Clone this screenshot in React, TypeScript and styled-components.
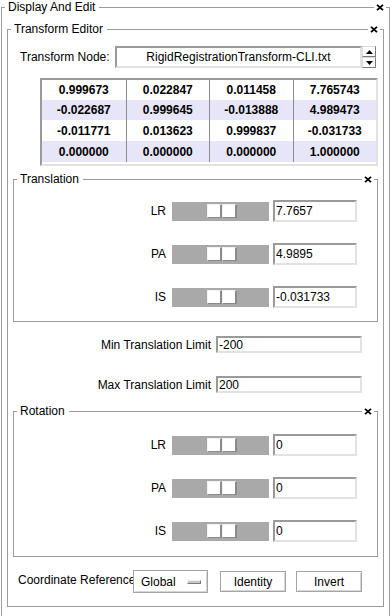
import React from "react";
import styled, { createGlobalStyle } from "styled-components";

const LINE = "#9c9c9c";
const SUNK_DARK = "#9a9a9a";
const SUNK_LIGHT = "#e2e2e2";

const GlobalStyle = createGlobalStyle`
  html, body {
    margin: 0;
    padding: 0;
    background: #ffffff;
  }
  body {
    font-family: "Liberation Sans", Arial, sans-serif;
    font-size: 12px;
    color: #000;
  }
`;

const Page = styled.div`
  width: 392px;
  height: 616px;
  padding: 0 2px 0 1px;
  box-sizing: border-box;
  overflow: hidden;
`;

/* ---------- group frame ---------- */

const FrameBox = styled.div<{ $top?: number }>`
  display: flex;
  flex-direction: column;
  margin-top: ${(p) => p.$top || 0}px;
`;

const FrameHead = styled.div`
  display: flex;
  height: 14px;
`;

const Lead = styled.div`
  flex: none;
  width: 3px;
  margin-top: 7px;
  border-top: 1px solid ${LINE};
  border-left: 1px solid ${LINE};
`;

const Tail = styled.div`
  flex: none;
  width: 3px;
  margin-top: 7px;
  border-top: 1px solid ${LINE};
  border-right: 1px solid ${LINE};
`;

const Caption = styled.span`
  flex: none;
  line-height: 14px;
  padding: 0 4px 0 3px;
  white-space: nowrap;
`;

const Rule = styled.div`
  flex: 1;
  align-self: flex-start;
  margin-top: 7px;
  height: 1px;
  background: ${LINE};
`;

const CloseMark = styled.svg`
  flex: none;
  align-self: center;
  margin: 0 2px;
`;

const FrameBody = styled.div<{ $pad: string }>`
  display: flex;
  flex-direction: column;
  border: 1px solid ${LINE};
  border-top: none;
  padding: ${(p) => p.$pad};
`;

const Frame = (props: { title: string; pad: string; top?: number; children?: React.ReactNode }) => (
  <FrameBox $top={props.top}>
    <FrameHead>
      <Lead />
      <Caption>{props.title}</Caption>
      <Rule />
      <CloseMark width="8" height="7" viewBox="0 0 8 7">
        <path d="M1 0.8 L7 6.2 M7 0.8 L1 6.2" stroke="#000" strokeWidth="1.8" fill="none" />
      </CloseMark>
      <Tail />
    </FrameHead>
    <FrameBody $pad={props.pad}>{props.children}</FrameBody>
  </FrameBox>
);

/* ---------- transform node ---------- */

const NodeRow = styled.div`
  display: flex;
  align-items: center;
  height: 22px;
  padding-left: 7px;
`;

const NodeLabel = styled.span`
  width: 95px;
  flex: none;
  white-space: nowrap;
`;

const NodeField = styled.div`
  width: 247px;
  height: 22px;
  box-sizing: border-box;
  border-style: solid;
  border-width: 2px;
  border-color: ${SUNK_DARK} ${SUNK_LIGHT} ${SUNK_LIGHT} ${SUNK_DARK};
  background: #fff;
  display: flex;
  align-items: center;
  justify-content: center;
  white-space: nowrap;
`;

const Spin = styled.div`
  display: flex;
  flex-direction: column;
  width: 14px;
  height: 22px;
`;

const SpinButton = styled.div`
  flex: 1;
  box-sizing: border-box;
  border-style: solid;
  border-width: 1px;
  border-color: #dadada #7c7c7c #7c7c7c #dadada;
  background: #fff;
  display: flex;
  align-items: center;
  justify-content: center;
`;

/* ---------- matrix ---------- */

const Matrix = styled.div`
  margin: 10px 0 0 27px;
  display: grid;
  grid-template-columns: repeat(4, 1fr);
  grid-template-rows: 20px 20px 21px 21px;
  border-style: solid;
  border-width: 2px;
  border-color: ${SUNK_DARK} ${SUNK_LIGHT} ${SUNK_LIGHT} ${SUNK_DARK};
  padding-bottom: 2px;
  background: #fff;
`;

const Cell = styled.div<{ $alt: boolean; $first: boolean }>`
  display: flex;
  align-items: center;
  justify-content: center;
  font-weight: bold;
  background: ${(p) => (p.$alt ? "#e6e6f8" : "#fff")};
  border-left: ${(p) => (p.$first ? "none" : "1px solid #8c8c8c")};
`;

/* ---------- slider rows ---------- */

const SliderList = styled.div`
  display: flex;
  flex-direction: column;
  gap: 21px;
`;

const SliderRow = styled.div`
  display: flex;
  align-items: center;
  justify-content: flex-end;
  height: 22px;
  padding-right: 20px;
`;

const AxisLabel = styled.span`
  margin-right: 6px;
`;

const Trough = styled.div`
  width: 97px;
  height: 19px;
  background: #a9a9a9;
  display: flex;
  align-items: center;
  justify-content: center;
  padding-left: 2px;
  box-sizing: border-box;
`;

const Knob = styled.div`
  width: 15px;
  height: 14px;
  box-sizing: border-box;
  background: #fff;
  border-style: solid;
  border-width: 1px 2px 1px 1px;
  border-color: #f2f2f2 #8a8a8a #8a8a8a #f2f2f2;
`;

const Field = styled.input<{ $w: number; $h: number }>`
  width: ${(p) => p.$w}px;
  height: ${(p) => p.$h}px;
  box-sizing: border-box;
  margin: 0;
  padding: 0 1px;
  font: inherit;
  color: #000;
  background: #fff;
  outline: none;
  border-style: solid;
  border-width: 2px;
  border-color: ${SUNK_DARK} ${SUNK_LIGHT} ${SUNK_LIGHT} ${SUNK_DARK};
`;

const ValueField = styled(Field)`
  margin-left: 4px;
`;

/* ---------- limits ---------- */

const LimitRow = styled.div<{ $top: number }>`
  display: flex;
  align-items: center;
  justify-content: flex-end;
  height: 17px;
  margin-top: ${(p) => p.$top}px;
  padding-right: 16px;
`;

const LimitLabel = styled.span`
  margin-right: 5px;
  white-space: nowrap;
`;

/* ---------- bottom bar ---------- */

const BottomBar = styled.div`
  display: flex;
  align-items: center;
  height: 23px;
  margin-top: 13px;
  padding-left: 5px;
`;

const RefLabel = styled.span`
  width: 115px;
  overflow: hidden;
  white-space: nowrap;
  flex: none;
  margin-top: -3px;
`;

const OptionMenu = styled.div`
  width: 75px;
  height: 23px;
  box-sizing: border-box;
  border: 1px solid #a4a4a4;
  box-shadow: inset 1px 1px #fff, inset -1px -1px #d6d6d6;
  background: #fff;
  display: flex;
  align-items: center;
  justify-content: space-between;
  padding: 0 6px 0 7px;
`;

const MenuBar = styled.span`
  width: 14px;
  height: 4px;
  box-sizing: border-box;
  background: #c6c6c6;
  border-style: solid;
  border-width: 1px;
  border-color: #f0f0f0 #7c7c7c #7c7c7c #f0f0f0;
`;

const PushButton = styled.button<{ $gap: number }>`
  width: 66px;
  height: 21px;
  margin: 0 0 0 ${(p) => p.$gap}px;
  padding: 0;
  font: inherit;
  color: #000;
  background: #fff;
  border: 1px solid #a4a4a4;
  box-shadow: inset 1px 1px #fff, inset -1px -1px #d6d6d6;
`;

const matrix = [
  ["0.999673", "0.022847", "0.011458", "7.765743"],
  ["-0.022687", "0.999645", "-0.013888", "4.989473"],
  ["-0.011771", "0.013623", "0.999837", "-0.031733"],
  ["0.000000", "0.000000", "0.000000", "1.000000"],
];

const Slider = () => (
  <Trough>
    <Knob />
    <Knob />
  </Trough>
);

const AxisRows = (props: { values: string[] }) => (
  <SliderList>
    {["LR", "PA", "IS"].map((axis, i) => (
      <SliderRow key={axis}>
        <AxisLabel>{axis}</AxisLabel>
        <Slider />
        <ValueField $w={84} $h={22} readOnly value={props.values[i]} />
      </SliderRow>
    ))}
  </SliderList>
);

export default function App() {
  return (
    <Page>
      <GlobalStyle />
      <Frame title="Display And Edit" pad="8px 5px 11px 5px">
        <Frame title="Transform Editor" pad="10px 5px 13px 5px">
          <NodeRow>
            <NodeLabel>Transform Node:</NodeLabel>
            <NodeField>RigidRegistrationTransform-CLI.txt</NodeField>
            <Spin>
              <SpinButton>
                <svg width="7" height="4" viewBox="0 0 7 4">
                  <polygon points="0,4 3.5,0 7,4" fill="#000" />
                </svg>
              </SpinButton>
              <SpinButton>
                <svg width="7" height="4" viewBox="0 0 7 4">
                  <polygon points="0,0 7,0 3.5,4" fill="#000" />
                </svg>
              </SpinButton>
            </Spin>
          </NodeRow>

          <Matrix>
            {matrix.map((row, r) =>
              row.map((v, c) => (
                <Cell key={`${r}-${c}`} $alt={r % 2 === 1} $first={c === 0}>
                  {v}
                </Cell>
              ))
            )}
          </Matrix>

          <Frame title="Translation" pad="14px 0 13px 0" top={6}>
            <AxisRows values={["7.7657", "4.9895", "-0.031733"]} />
          </Frame>

          <LimitRow $top={14}>
            <LimitLabel>Min Translation Limit</LimitLabel>
            <Field $w={146} $h={17} readOnly value="-200" />
          </LimitRow>
          <LimitRow $top={23}>
            <LimitLabel>Max Translation Limit</LimitLabel>
            <Field $w={146} $h={17} readOnly value="200" />
          </LimitRow>

          <Frame title="Rotation" pad="16px 0 14px 0" top={11}>
            <AxisRows values={["0", "0", "0"]} />
          </Frame>

          <BottomBar>
            <RefLabel>Coordinate Reference</RefLabel>
            <OptionMenu>
              <span>Global</span>
              <MenuBar />
            </OptionMenu>
            <PushButton $gap={12}>Identity</PushButton>
            <PushButton $gap={10}>Invert</PushButton>
          </BottomBar>
        </Frame>
      </Frame>
    </Page>
  );
}
